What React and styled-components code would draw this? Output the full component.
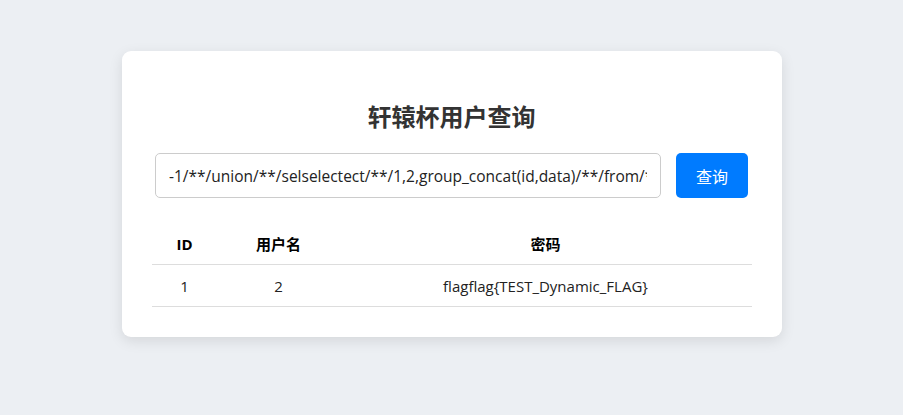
import styled, { createGlobalStyle } from "styled-components";

const GlobalStyle = createGlobalStyle`
  html, body {
    margin: 0;
    padding: 0;
    background: #eceff3;
    font-family: "Open Sans", "Noto Sans", "Noto Sans CJK SC", sans-serif;
  }
`;

const Page = styled.div`
  display: flex;
  justify-content: center;
  align-items: flex-start;
  padding-top: 51px;
  min-height: 415px;
  box-sizing: border-box;
`;

const Card = styled.div`
  width: 660px;
  box-sizing: border-box;
  padding: 47px 30px 30px;
  background: #fff;
  border-radius: 9px;
  box-shadow: 0 4px 14px rgba(0, 0, 0, 0.1);
`;

const Title = styled.h2`
  margin: 0 0 19px;
  text-align: center;
  font-family: "Noto Sans CJK SC", sans-serif;
  font-size: 24px;
  font-weight: 700;
  color: #333;
  line-height: 36px;
`;

const Form = styled.form`
  display: flex;
  justify-content: center;
  gap: 15px;
`;

const Input = styled.input`
  width: 506px;
  height: 45px;
  box-sizing: border-box;
  padding: 0 13px;
  border: 1px solid #ccc;
  border-radius: 5px;
  font-family: "Open Sans", "Noto Sans CJK SC", sans-serif;
  font-size: 15.5px;
  color: #222;
  outline: none;
`;

const Button = styled.button`
  width: 72px;
  height: 45px;
  border: none;
  border-radius: 5px;
  background: #007bff;
  color: #fff;
  font-family: "Noto Sans CJK SC", sans-serif;
  font-size: 16px;
  cursor: pointer;
`;

const Table = styled.table`
  width: 100%;
  margin-top: 25px;
  border-collapse: collapse;
  font-family: "Open Sans", "Noto Sans CJK SC", sans-serif;
  font-size: 15px;
`;

const Th = styled.th`
  width: ${(p) => p.$w || "auto"};
  height: 41px;
  padding: 0;
  text-align: center;
  font-weight: 700;
  color: #000;
  border-bottom: 1px solid #ddd;
`;

const Td = styled.td`
  height: 41px;
  padding: 0;
  text-align: center;
  color: #222;
  border-bottom: 1px solid #ddd;
`;

export default function App() {
  return (
    <>
      <GlobalStyle />
      <Page>
        <Card>
          <Title>轩辕杯用户查询</Title>
          <Form onSubmit={(e) => e.preventDefault()}>
            <Input
              defaultValue="-1/**/union/**/selselectect/**/1,2,group_concat(id,data)/**/from/**/users"
            />
            <Button type="submit">查询</Button>
          </Form>
          <Table>
            <thead>
              <tr>
                <Th $w="66px">ID</Th>
                <Th $w="122px">用户名</Th>
                <Th>密码</Th>
              </tr>
            </thead>
            <tbody>
              <tr>
                <Td>1</Td>
                <Td>2</Td>
                <Td>flagflag{"{"}TEST_Dynamic_FLAG{"}"}</Td>
              </tr>
            </tbody>
          </Table>
        </Card>
      </Page>
    </>
  );
}
